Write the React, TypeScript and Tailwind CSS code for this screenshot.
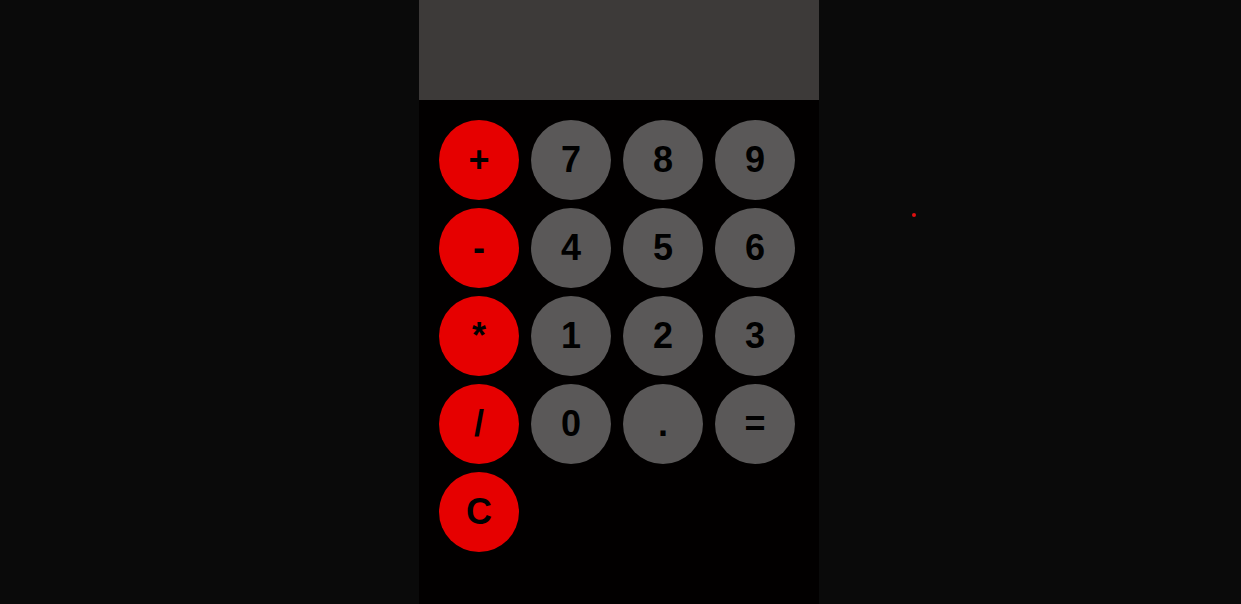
import { useState } from 'react';

const keys = [
  ['+', 'op'], ['7', 'num'], ['8', 'num'], ['9', 'num'],
  ['-', 'op'], ['4', 'num'], ['5', 'num'], ['6', 'num'],
  ['*', 'op'], ['1', 'num'], ['2', 'num'], ['3', 'num'],
  ['/', 'op'], ['0', 'num'], ['.', 'num'], ['=', 'num'],
  ['C', 'op'],
];

export default function App() {
  const [display, setDisplay] = useState('');

  const press = (k: string) => {
    if (k === 'C') return setDisplay('');
    if (k === '=') {
      try {
        // eslint-disable-next-line no-new-func
        setDisplay(String(Function(`return (${display})`)()));
      } catch {
        setDisplay('Error');
      }
      return;
    }
    setDisplay(display + k);
  };

  return (
    <div className="relative min-h-screen bg-[#0a0a0a] font-['Liberation_Sans',Arial,sans-serif]">
      <div className="ml-[calc(50%-201.5px)] w-[400px] min-h-screen bg-[#020000]">
        <div className="h-[100px] bg-[#3d3a39] text-white text-4xl flex items-center justify-end px-5">
          {display}
        </div>
        <div className="grid grid-cols-[repeat(4,80px)] gap-x-3 gap-y-2 p-5">
          {keys.map(([k, type]) => (
            <button
              key={k}
              onClick={() => press(k)}
              className={`w-20 h-20 rounded-full text-[36px] font-bold text-black flex items-center justify-center ${
                type === 'op' ? 'bg-[#e60000]' : 'bg-[#5a5858]'
              }`}
            >
              {k}
            </button>
          ))}
        </div>
      </div>
      <span className="absolute left-[912px] top-[213px] w-1 h-1 rounded-full bg-[#e01010]" />
    </div>
  );
}
